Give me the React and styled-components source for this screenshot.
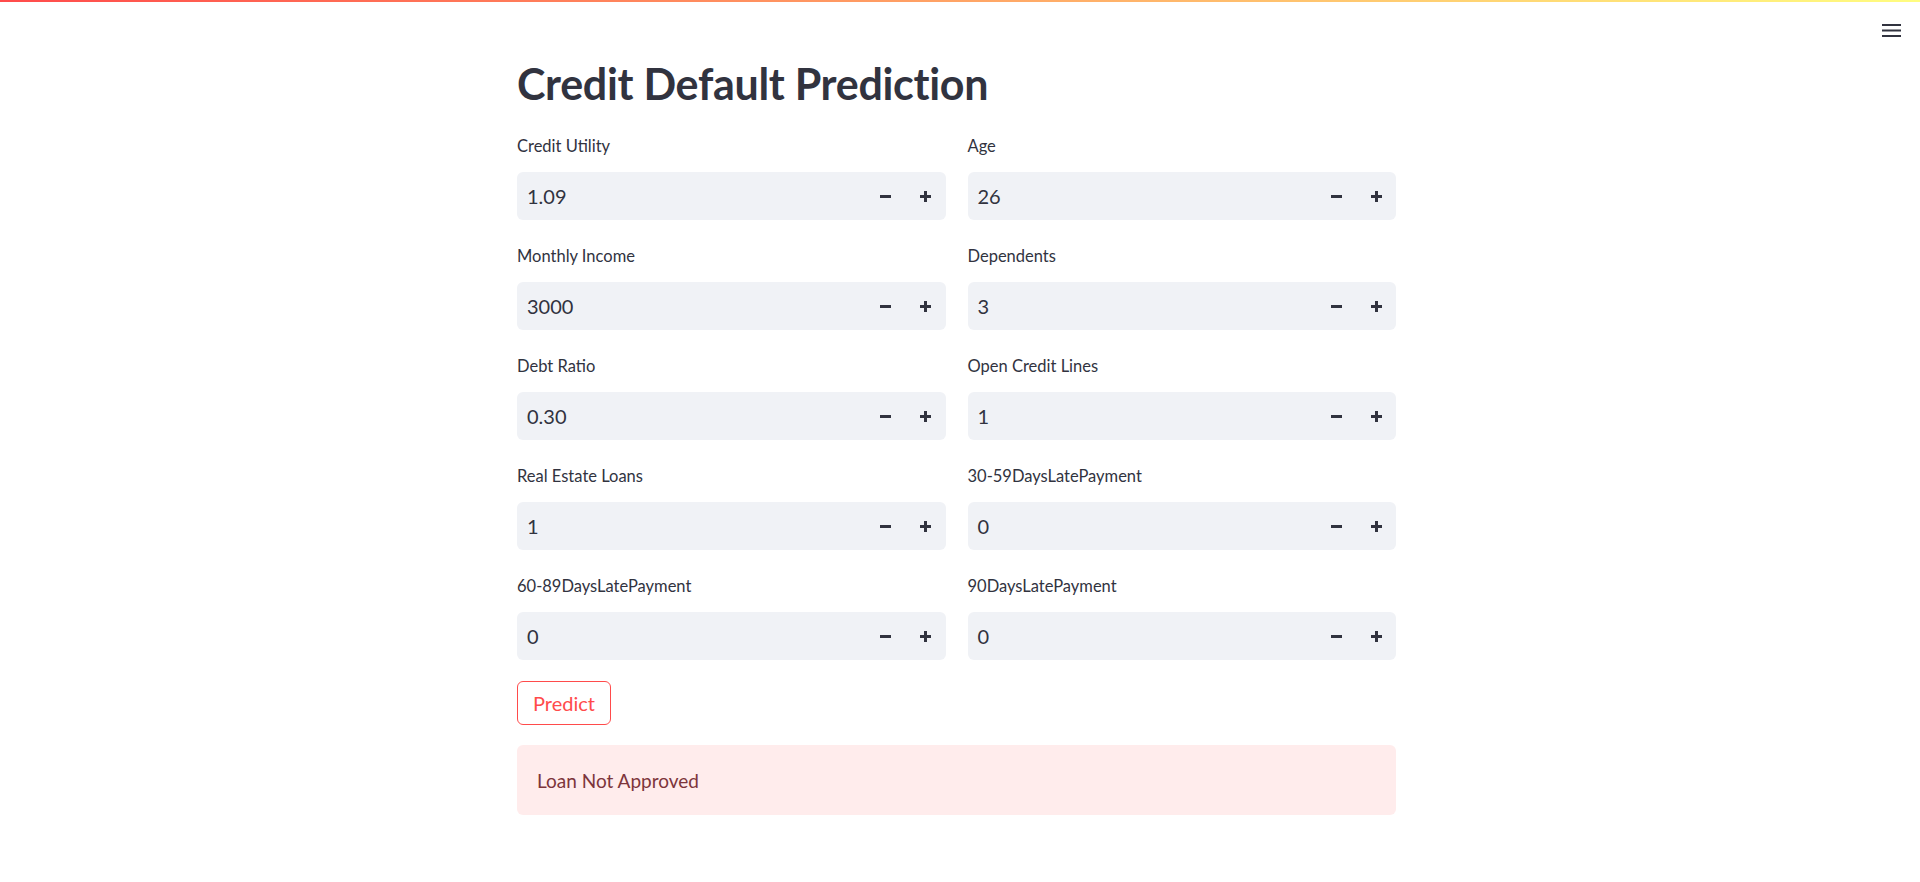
import styled, { createGlobalStyle } from 'styled-components'

const GlobalStyle = createGlobalStyle`
  body {
    margin: 0;
    background: #ffffff;
    color: rgb(49, 51, 63);
    font-family: Lato, "Liberation Sans", sans-serif;
  }
`

const Decoration = styled.div`
  height: 2px;
  background: linear-gradient(90deg, rgb(255, 75, 75), rgb(255, 253, 128));
`

const Header = styled.header`
  display: flex;
  justify-content: flex-end;
  padding: 20px 18px 0 0;
  height: 30px;
`

const MenuButton = styled.button`
  border: none;
  background: transparent;
  padding: 0;
  width: 22px;
  height: 16px;
  display: flex;
  align-items: center;
  justify-content: center;
  color: rgb(49, 51, 63);
`

const Main = styled.main`
  display: flex;
  justify-content: center;
  padding-right: 7px;
`

const Block = styled.div`
  width: 879px;
  display: flex;
  flex-direction: column;
`

const Title = styled.h1`
  margin: 5px 0 22px;
  font-size: 43px;
  line-height: 54px;
  font-weight: 700;
  letter-spacing: -0.3px;
`

const Grid = styled.div`
  display: grid;
  grid-template-columns: 1fr 1fr;
  column-gap: 22px;
  row-gap: 23px;
`

const Field = styled.div`
  display: flex;
  flex-direction: column;
`

const Label = styled.label`
  font-size: 16.5px;
  line-height: 27px;
  margin-bottom: 12px;
`

const InputBox = styled.div`
  display: flex;
  align-items: center;
  height: 48px;
  background: rgb(240, 242, 246);
  border-radius: 6px;
`

const Value = styled.span`
  flex: 1;
  padding-left: 10px;
  font-size: 20px;
`

const Step = styled.button`
  width: 40px;
  height: 48px;
  border: none;
  background: transparent;
  padding: 0;
  display: flex;
  align-items: center;
  justify-content: center;
  color: rgb(49, 51, 63);
`

const PredictButton = styled.button`
  align-self: flex-start;
  margin-top: 21px;
  height: 44px;
  padding: 0 15px;
  border: 1px solid rgb(255, 75, 75);
  border-radius: 6px;
  background: #ffffff;
  color: rgb(255, 75, 75);
  font-family: inherit;
  font-size: 20px;
`

const Alert = styled.div`
  margin-top: 20px;
  height: 70px;
  box-sizing: border-box;
  padding: 0 20px;
  display: flex;
  align-items: center;
  background: rgb(255, 236, 236);
  border-radius: 6px;
  color: rgb(125, 53, 59);
  font-size: 19px;
`

const fields = [
  ['Credit Utility', '1.09'],
  ['Age', '26'],
  ['Monthly Income', '3000'],
  ['Dependents', '3'],
  ['Debt Ratio', '0.30'],
  ['Open Credit Lines', '1'],
  ['Real Estate Loans', '1'],
  ['30-59DaysLatePayment', '0'],
  ['60-89DaysLatePayment', '0'],
  ['90DaysLatePayment', '0'],
]

function Minus() {
  return (
    <svg width="11" height="11" viewBox="0 0 11 11">
      <rect x="0" y="4" width="11" height="3" fill="currentColor" />
    </svg>
  )
}

function Plus() {
  return (
    <svg width="11" height="11" viewBox="0 0 11 11">
      <rect x="0" y="4" width="11" height="3" fill="currentColor" />
      <rect x="4" y="0" width="3" height="11" fill="currentColor" />
    </svg>
  )
}

function NumberInput({ label, value }) {
  return (
    <Field>
      <Label>{label}</Label>
      <InputBox>
        <Value>{value}</Value>
        <Step><Minus /></Step>
        <Step><Plus /></Step>
      </InputBox>
    </Field>
  )
}

export default function App() {
  return (
    <>
      <GlobalStyle />
      <Decoration />
      <Header>
        <MenuButton>
          <svg width="19" height="13" viewBox="0 0 19 13">
            <rect x="0" y="0" width="19" height="2" fill="currentColor" />
            <rect x="0" y="5.5" width="19" height="2" fill="currentColor" />
            <rect x="0" y="11" width="19" height="2" fill="currentColor" />
          </svg>
        </MenuButton>
      </Header>
      <Main>
        <Block>
          <Title>Credit Default Prediction</Title>
          <Grid>
            {fields.map(([label, value]) => (
              <NumberInput key={label} label={label} value={value} />
            ))}
          </Grid>
          <PredictButton>Predict</PredictButton>
          <Alert>Loan Not Approved</Alert>
        </Block>
      </Main>
    </>
  )
}
